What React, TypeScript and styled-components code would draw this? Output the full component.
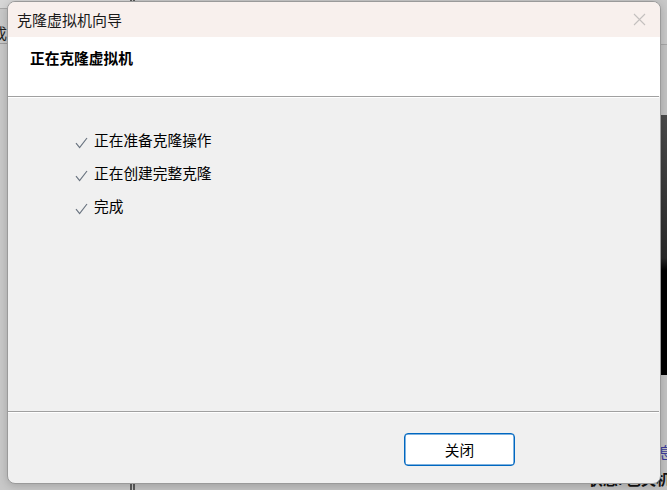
import React from "react";
import styled, { createGlobalStyle } from "styled-components";

const Global = createGlobalStyle`
  html, body { margin: 0; padding: 0; }
  body {
    width: 667px;
    height: 490px;
    overflow: hidden;
    font-family: "Noto Sans CJK SC", "Noto Sans", sans-serif;
  }
`;

const Screen = styled.div`
  position: relative;
  width: 667px;
  height: 490px;
  overflow: hidden;
  background: #b6b6b6;
`;

/* ---------- background application (dimmed behind the modal) ---------- */
const BackApp = styled.div`
  display: flex;
  width: 100%;
  height: 100%;
`;

const SidePane = styled.div`
  width: 130px;
  display: flex;
  flex-direction: column;
  background: #c8c8c8;
  border-right: 5px double #5a5a5a;
`;

const SideTop = styled.div`
  height: 8px;
  background: #d6d6d6;
  border-bottom: 1px solid #a8a8a8;
`;

const SideText = styled.div`
  padding: 14px 0 0 0;
  margin-left: -8px;
  font-size: 15px;
  color: #222;
  line-height: 20px;
  border-bottom: 1px solid #9c9c9c;
`;

const MainPane = styled.div`
  flex: 1;
  display: flex;
  flex-direction: column;
  background: #c2c2c2;
`;

const BackToolbar = styled.div`
  height: 44px;
  background: #c8c8c8;
  border-bottom: 1px solid #a6a6a6;
`;

const PreviewRow = styled.div`
  display: flex;
  justify-content: flex-end;
  padding-top: 70px;
`;

const Preview = styled.div`
  width: 140px;
  height: 260px;
  background: linear-gradient(#4a4a4a 0%, #2a2a2a 55%, #000 60%, #000 100%);
`;

const StatusArea = styled.div`
  display: flex;
  flex-direction: column;
  align-items: flex-end;
  padding: 66px 0 0 0;
  gap: 6px;
`;

const BackLink = styled.div`
  font-size: 15px;
  color: #3b3b9a;
  margin-right: -6px;
`;

const BackStatus = styled.div`
  font-size: 15px;
  font-weight: 700;
  color: #111;
  margin-right: -4px;
  white-space: nowrap;
`;

/* ---------- dialog ---------- */
const Dialog = styled.div`
  position: absolute;
  left: 7px;
  top: 1px;
  width: 654px;
  height: 483px;
  box-sizing: border-box;
  border: 1px solid #9a9a9a;
  border-radius: 8px;
  overflow: hidden;
  display: flex;
  flex-direction: column;
  background: #f0f0f0;
  box-shadow: 0 2px 8px rgba(0, 0, 0, 0.18);
`;

const TitleBar = styled.div`
  height: 35px;
  flex: none;
  display: flex;
  align-items: center;
  justify-content: space-between;
  background: #f8f0ed;
  padding: 0 14px 0 9px;
`;

const Title = styled.div`
  font-size: 15px;
  color: #1a1a1a;
  letter-spacing: 0;
`;

const CloseButton = styled.div`
  width: 14px;
  height: 14px;
  display: flex;
  align-items: center;
  justify-content: center;
`;

const Header = styled.div`
  height: 59px;
  flex: none;
  background: #ffffff;
  display: flex;
  align-items: flex-start;
  padding: 10px 0 0 22px;
  box-sizing: border-box;
`;

const HeaderTitle = styled.div`
  font-size: 14.7px;
  font-weight: 700;
  color: #000;
  line-height: 22px;
`;

const Separator = styled.div`
  flex: none;
  height: 1px;
  background: #a0a0a0;
  border-bottom: 1px solid #ffffff;
  margin-right: 1px;
`;

const Body = styled.div`
  flex: 1;
  display: flex;
  flex-direction: column;
  gap: 11px;
  padding: 31px 0 0 67px;
`;

const Step = styled.div`
  display: flex;
  align-items: center;
  gap: 6px;
  height: 22px;
`;

const CheckIcon = styled.svg`
  width: 13px;
  height: 12px;
  margin-top: 6px;
  flex: none;
`;

const StepText = styled.span`
  font-size: 14.7px;
  color: #000;
  line-height: 22px;
`;

const Footer = styled.div`
  height: 70px;
  flex: none;
  display: flex;
  justify-content: flex-end;
  align-items: flex-start;
  padding: 20px 145px 0 0;
  box-sizing: border-box;
`;

const Button = styled.button`
  width: 111px;
  height: 33px;
  box-sizing: border-box;
  border: 1px solid #0067c0;
  box-shadow: inset 0 0 0 0.5px #0067c0;
  border-radius: 4px;
  background: #ffffff;
  font-family: "Noto Sans CJK SC", "Noto Sans", sans-serif;
  font-size: 14.7px;
  color: #000;
  padding: 0;
  cursor: default;
`;

const Check = () => (
  <CheckIcon viewBox="0 0 13 12">
    <path d="M1 6.2 L4.6 10.6 L12 1" fill="none" stroke="#6a7480" strokeWidth="1.2" />
  </CheckIcon>
);

const steps = ["正在准备克隆操作", "正在创建完整克隆", "完成"];

export default function App() {
  return (
    <>
      <Global />
      <Screen>
        <BackApp>
          <SidePane>
            <SideTop />
            <SideText>成</SideText>
          </SidePane>
          <MainPane>
            <BackToolbar />
            <PreviewRow>
              <Preview />
            </PreviewRow>
            <StatusArea>
              <BackLink>信息</BackLink>
              <BackStatus>状态: 已关机</BackStatus>
            </StatusArea>
          </MainPane>
        </BackApp>

        <Dialog>
          <TitleBar>
            <Title>克隆虚拟机向导</Title>
            <CloseButton>
              <svg width="13" height="13" viewBox="0 0 13 13">
                <path d="M1 1 L12 12 M12 1 L1 12" stroke="#c4c0bf" strokeWidth="1.1" fill="none" />
              </svg>
            </CloseButton>
          </TitleBar>
          <Header>
            <HeaderTitle>正在克隆虚拟机</HeaderTitle>
          </Header>
          <Separator />
          <Body>
            {steps.map((s) => (
              <Step key={s}>
                <Check />
                <StepText>{s}</StepText>
              </Step>
            ))}
          </Body>
          <Separator />
          <Footer>
            <Button>关闭</Button>
          </Footer>
        </Dialog>
      </Screen>
    </>
  );
}
